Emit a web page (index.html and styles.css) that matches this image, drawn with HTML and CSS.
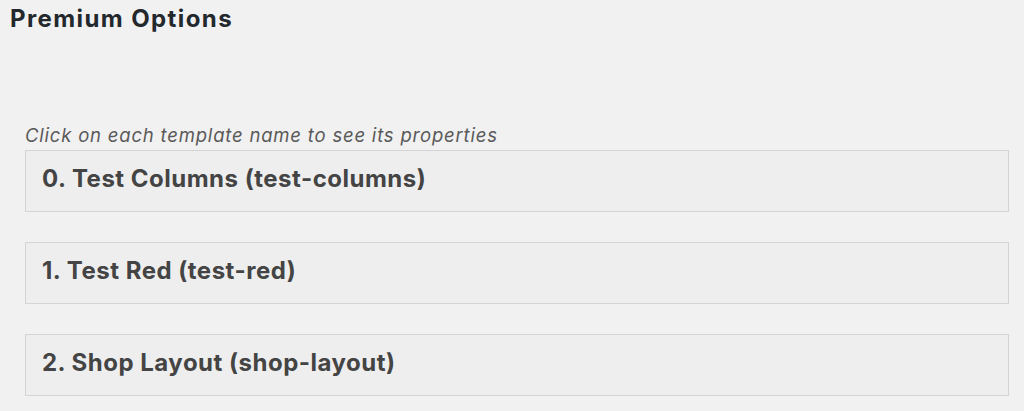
FILE: index.html
```html
<!DOCTYPE html>
<html lang="en">
<head>
  <meta charset="UTF-8" />
  <title>Premium Options</title>
  <link rel="stylesheet" href="styles.css">
</head>
<body>
  <div class="wrap">
    <h1>Premium Options</h1>
    <div class="templates">
      <p class="hint">Click on each template name to see its properties</p>
      <div class="template"><h3>0. Test Columns (test-columns)</h3></div>
      <div class="template"><h3>1. Test Red (test-red)</h3></div>
      <div class="template"><h3>2. Shop Layout (shop-layout)</h3></div>
    </div>
  </div>
</body>
</html>
```

FILE: styles.css
```css
body {
  margin: 0;
  background-color: #f1f1f1;
  font-family: Inter, "Liberation Sans", Arial, sans-serif;
  color: #23282d;
}
.wrap {
  padding: 4px 15px 0 10px;
}
h1 {
  margin: 0;
  font-size: 24px;
  font-weight: 700;
  line-height: 30px;
  letter-spacing: 1.4px;
  color: #23282d;
}
.templates {
  padding: 90px 0 0 15px;
}
/* hint line above the list */
.hint {
  margin: -1px 0 4px 0;
  padding-top: 1px;
  font-style: italic;
  font-size: 18.5px;
  line-height: 22px;
  letter-spacing: 0.8px;
  color: #5a5a5a;
}
.template {
  box-sizing: content-box;
  height: 55px;
  padding: 0 16px 5px;
  display: flex;
  align-items: center;
  margin-bottom: 30px;
  background-color: #eee;
  border: 1px solid #d4d4d4;
}
.template h3 {
  margin: 0;
  font-size: 24px;
  font-weight: 700;
  letter-spacing: 0.5px;
  color: #444;
}
```
